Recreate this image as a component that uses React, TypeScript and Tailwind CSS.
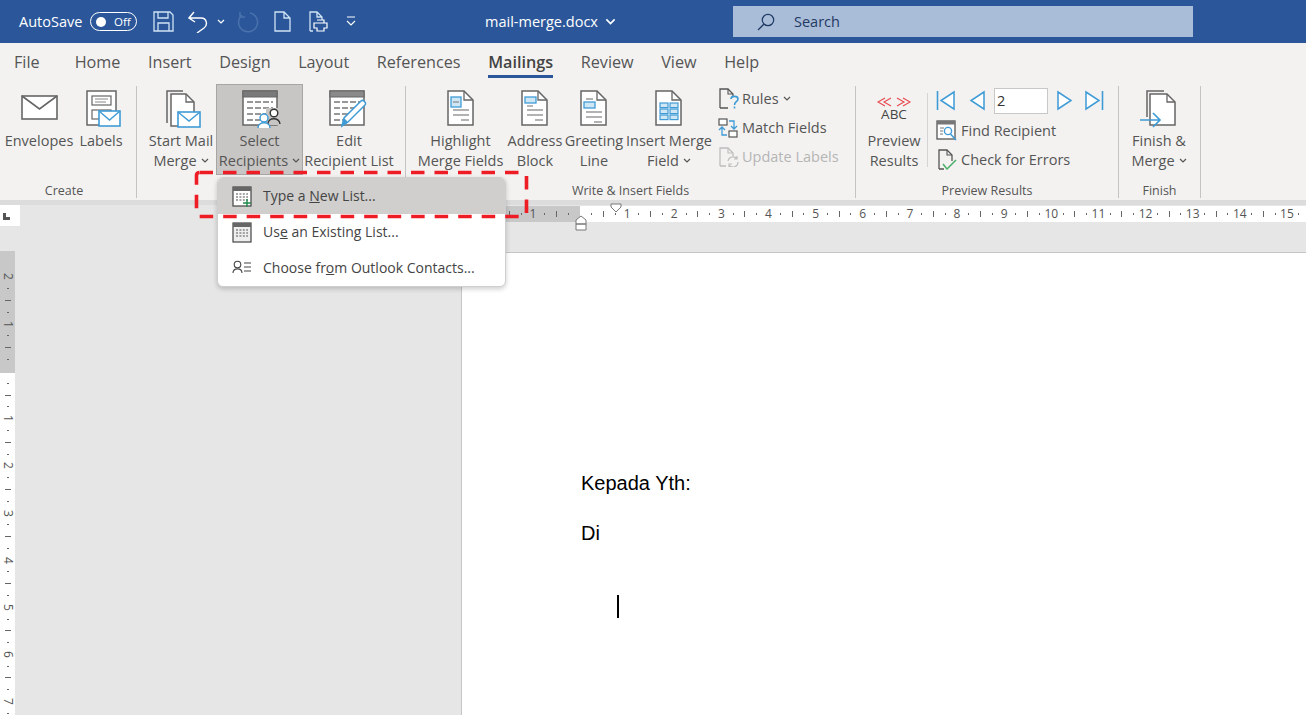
import React from "react";

const G = "#666666";
const B = "#3f9bd6";

const Chev = ({ c = "#555", w = 8, h = 5 }: { c?: string; w?: number; h?: number }) => (
  <svg width={w} height={h} viewBox="0 0 8 5" preserveAspectRatio="none" className="inline-block shrink-0">
    <polyline points="1,1 4,4 7,1" fill="none" stroke={c} strokeWidth="1.2" />
  </svg>
);

const Mail = ({ x, y, w = 23, h = 15 }: { x: number; y: number; w?: number; h?: number }) => (
  <g>
    <rect x={x} y={y} width={w} height={h} fill="#fff" stroke={B} strokeWidth="1.6" />
    <polyline points={`${x},${y} ${x + w / 2},${y + h * 0.6} ${x + w},${y}`} fill="none" stroke={B} strokeWidth="1.4" />
  </g>
);

const Envelope = () => (
  <svg width={38} height={28} viewBox="0 0 38 28">
    <rect x="1" y="2" width="35" height="23" fill="#fff" stroke={G} strokeWidth="1.6" />
    <polyline points="1,2 18.5,15 36,2" fill="none" stroke={G} strokeWidth="1.6" />
  </svg>
);

const Labels = () => (
  <svg width={36} height={38} viewBox="0 0 36 38">
    <rect x="1" y="1" width="29" height="34" fill="#fff" stroke={G} strokeWidth="1.5" />
    <rect x="6" y="6" width="19" height="9" fill="none" stroke={G} strokeWidth="1.2" />
    <line x1="9" y1="9" x2="22" y2="9" stroke="#888" />
    <line x1="9" y1="12" x2="20" y2="12" stroke="#888" />
    <rect x="6" y="20" width="19" height="9" fill="none" stroke={G} strokeWidth="1.2" />
    <Mail x={13} y={21} w={21} h={15} />
  </svg>
);

const StartMerge = () => (
  <svg width={36} height={38} viewBox="0 0 36 38">
    <path d="M1 33 V1 H17" fill="none" stroke={G} strokeWidth="1.5" />
    <path d="M5 36 V4 H20 L28 12 V36 Z" fill="#fff" stroke={G} strokeWidth="1.5" />
    <path d="M20 4 V12 H28" fill="none" stroke={G} strokeWidth="1.3" />
    <Mail x={12} y={22} w={22} h={15} />
  </svg>
);

const TableLines = ({ lines }: { lines: number[][] }) => (
  <>
    {lines.map((l, i) => (
      <line key={i} x1={l[0]} y1={l[1]} x2={l[2]} y2={l[1]} stroke="#777" strokeWidth="1.3" strokeDasharray="6 2" />
    ))}
  </>
);

const SelectRec = () => (
  <svg width={40} height={38} viewBox="0 0 40 38">
    <rect x="1" y="1" width="34" height="34" fill="#fff" stroke={G} strokeWidth="1.5" />
    <rect x="1" y="1" width="34" height="6" fill="#7a7a7a" stroke={G} />
    <TableLines lines={[[5, 12, 31], [5, 18, 31], [5, 24, 26], [5, 30, 18]]} />
    <rect x="24" y="18" width="14" height="17" fill="#c8c6c4" />
    <circle cx="32" cy="23" r="3.8" fill="#fff" stroke="#333" strokeWidth="1.4" />
    <path d="M26 34 C26 27 37 27 38 34" fill="none" stroke="#333" strokeWidth="1.4" />
    <circle cx="22" cy="28" r="4" fill="#fff" stroke={B} strokeWidth="1.5" />
    <path d="M16 38 C16 31 28 31 28 38" fill="#fff" stroke={B} strokeWidth="1.5" />
  </svg>
);

const EditList = () => (
  <svg width={40} height={38} viewBox="0 0 40 38">
    <rect x="1" y="1" width="34" height="34" fill="#fff" stroke={G} strokeWidth="1.5" />
    <rect x="1" y="1" width="34" height="6" fill="#8a8a8a" stroke={G} />
    <TableLines lines={[[5, 12, 31], [5, 18, 26], [5, 24, 20], [5, 30, 16]]} />
    <path d="M13 36 L15 28 L32 11 C34 9 38 13 36 15 L19 32 Z" fill="#fff" stroke={B} strokeWidth="1.5" />
    <path d="M13 36 L15 28 L19 32 Z" fill={B} />
  </svg>
);

const Doc = ({ children }: { children?: React.ReactNode }) => (
  <svg width={28} height={36} viewBox="0 0 28 36">
    <path d="M1 1 H17 L26 10 V35 H1 Z" fill="#fff" stroke={G} strokeWidth="1.5" />
    <path d="M17 1 V10 H26" fill="none" stroke={G} strokeWidth="1.3" />
    {children}
  </svg>
);

const DocLines = ({ y }: { y: number }) => (
  <>
    <line x1="6" y1={y} x2="22" y2={y} stroke="#888" strokeWidth="1.3" />
    <line x1="6" y1={y + 5} x2="22" y2={y + 5} stroke="#888" strokeWidth="1.3" />
    <line x1="14" y1={y + 10} x2="22" y2={y + 10} stroke="#888" strokeWidth="1.3" />
  </>
);

const Highlight = () => (
  <Doc>
    <rect x="4" y="7" width="10" height="10" fill="#cfe6f5" stroke={B} strokeWidth="1.3" />
    <line x1="6" y1="12" x2="12" y2="12" stroke="#777" />
    <DocLines y={20} />
  </Doc>
);
const Address = () => (
  <Doc>
    <rect x="4" y="7" width="11" height="6" fill="#cfe6f5" stroke={B} strokeWidth="1.3" />
    <line x1="6" y1="16" x2="12" y2="16" stroke="#888" strokeWidth="1.2" />
    <DocLines y={20} />
  </Doc>
);
const Greeting = () => (
  <Doc>
    <line x1="6" y1="9" x2="13" y2="9" stroke="#888" strokeWidth="1.3" />
    <rect x="4" y="12" width="11" height="6" fill="#cfe6f5" stroke={B} strokeWidth="1.3" />
    <DocLines y={22} />
  </Doc>
);
const InsertField = () => (
  <Doc>
    {[13, 19, 25].map((y) => (
      <g key={y}>
        <rect x="5" y={y} width="8" height="4.6" fill="#cfe6f5" stroke={B} strokeWidth="1.2" />
        <rect x="15" y={y} width="8" height="4.6" fill="#cfe6f5" stroke={B} strokeWidth="1.2" />
      </g>
    ))}
  </Doc>
);

const Rules = () => (
  <svg className="translate-x-[2px]" width={21} height={21} viewBox="0 0 21 21">
    <path d="M1 20 V1 H9 L14 6 V8 M1 20 H9" fill="none" stroke="#555" strokeWidth="1.3" />
    <path d="M9 1 V6 H14" fill="none" stroke="#555" strokeWidth="1.1" />
    <path d="M12 11 C12 7.5 19 7.5 19 11 C19 14 15.5 13.5 15.5 17 M15.5 18.5 V20.5" fill="none" stroke={B} strokeWidth="1.6" />
  </svg>
);
const Match = () => (
  <svg width={20} height={20} viewBox="0 0 20 20">
    <rect x="1" y="1" width="8" height="6" fill="#fff" stroke="#555" strokeWidth="1.2" />
    <rect x="11" y="13" width="8" height="6" fill="#fff" stroke="#555" strokeWidth="1.2" />
    <path d="M11 3 H16 V10 M13 8 L16 11 L19 8" fill="none" stroke={B} strokeWidth="1.3" />
    <path d="M9 17 H4 V10 M1 12 L4 9 L7 12" fill="none" stroke={B} strokeWidth="1.3" />
  </svg>
);
const Update = () => (
  <svg className="translate-x-[1px]" width={20} height={20} viewBox="0 0 20 20">
    <path d="M1 19 V1 H9 L14 6 V9 M1 19 H7" fill="none" stroke="#bdbdbd" strokeWidth="1.3" />
    <path d="M9 1 V6 H14" fill="none" stroke="#bdbdbd" strokeWidth="1.1" />
    <path d="M9 14 A5 5 0 0 1 18 12 M19 15 A5 5 0 0 1 10 18 M18 9 V12 H15 M10 20 V17 H13" fill="none" stroke="#bdbdbd" strokeWidth="1.2" />
  </svg>
);

const PreviewIcon = () => (
  <svg width={46} height={20} viewBox="0 0 46 20">
    <g fill="none" stroke="#e8474c" strokeWidth="1.1">
      <polyline points="14,1 7,5 14,9" />
      <polyline points="20,1 13,5 20,9" />
      <polyline points="26,1 33,5 26,9" />
      <polyline points="32,1 39,5 32,9" />
    </g>
  </svg>
);

const Tri = ({ flip, bar }: { flip?: boolean; bar?: boolean }) => (
  <svg width={20} height={21} viewBox="0 0 20 21" style={{ transform: flip ? "scaleX(-1)" : undefined }}>
    <path d={bar ? "M18 2 V19 L5 10.5 Z" : "M16 2 V19 L3 10.5 Z"} fill="#fff" stroke={B} strokeWidth="1.5" />
    {bar && <line x1="1.5" y1="1" x2="1.5" y2="20" stroke={B} strokeWidth="1.6" />}
  </svg>
);

const FindRec = () => (
  <svg width={21} height={21} viewBox="0 0 21 21">
    <rect x="1" y="1" width="18" height="18" fill="#fff" stroke="#555" strokeWidth="1.3" />
    <rect x="1" y="1" width="18" height="3.5" fill="#777" />
    <path d="M4 8 H8 M4 11 H7 M4 14 H7" stroke="#777" strokeWidth="1.2" />
    <circle cx="12" cy="11" r="3.6" fill="#fff" stroke={B} strokeWidth="1.4" />
    <line x1="14.5" y1="14" x2="20" y2="20" stroke={B} strokeWidth="1.6" />
  </svg>
);
const CheckErr = () => (
  <svg width={19} height={21} viewBox="0 0 19 21">
    <path d="M1 20 V1 H9 L14 6 V12 M1 20 H6" fill="none" stroke="#555" strokeWidth="1.3" />
    <path d="M9 1 V6 H14" fill="none" stroke="#555" strokeWidth="1.1" />
    <polyline points="5,15 9,20 18,11" fill="none" stroke="#4caf6a" strokeWidth="1.5" />
  </svg>
);

const FinishIcon = () => (
  <svg width={36} height={38} viewBox="0 0 36 38">
    <path d="M7 27 V1 H24" fill="none" stroke={G} strokeWidth="1.5" />
    <path d="M10 35 V4 H27 L35 12 V35 Z" fill="#fff" stroke={G} strokeWidth="1.5" />
    <path d="M27 4 V12 H35" fill="none" stroke={G} strokeWidth="1.3" />
    <path d="M0 30 H19 M13 23 L20 30 L13 37" fill="none" stroke={B} strokeWidth="1.7" />
  </svg>
);

function LargeBtn({ w, icon, lines, chev, active, iconH = 40 }: { w: number; icon: React.ReactNode; lines: string[]; chev?: boolean; active?: boolean; iconH?: number }) {
  return (
    <div
      className={`flex flex-col items-center shrink-0 h-[91px] ${active ? "bg-[#c8c6c4] border border-[#a8a6a4] pt-[5px]" : "pt-[6px]"}`}
      style={{ width: w }}
    >
      <div className="flex items-start justify-center" style={{ height: iconH }}>{icon}</div>
      <div className="text-[14.5px] leading-[19.5px] text-center text-[#555] whitespace-nowrap mt-[1px]">
        {lines.map((l, i) => (
          <div key={i} className="flex items-center justify-center gap-[4px]">
            <span>{l}</span>
            {chev && i === lines.length - 1 && <Chev />}
          </div>
        ))}
      </div>
    </div>
  );
}

function Group({ w, label, pl = 0, lpr = 0, children }: { w: number; label: string; pl?: number; lpr?: number; children: React.ReactNode }) {
  return (
    <div className="flex flex-col shrink-0 h-[112px] border-r border-[#c4c4c4] mt-[2px]" style={{ width: w }}>
      <div className="flex h-[91px] -mt-[2px]" style={{ paddingLeft: pl }}>{children}</div>
      <div className="text-[12.5px] leading-[16px] text-[#555] text-center mt-[8px]" style={{ paddingRight: lpr }}>{label}</div>
    </div>
  );
}

const SmallBtn = ({ icon, label, dim, chev, h = 29 }: { icon: React.ReactNode; label: string; dim?: boolean; chev?: boolean; h?: number }) => (
  <div className="flex items-center gap-[4px] whitespace-nowrap text-[14.5px] shrink-0" style={{ height: h, color: dim ? "#b5b5b5" : "#555" }}>
    <div className="w-[21px] flex justify-end">{icon}</div>
    <span>{label}</span>
    {chev && <Chev />}
  </div>
);

const TAB_CLS = "text-[16.2px] text-[#555] leading-[24px]";

function TitleBar() {
  return (
    <div className="h-[43px] bg-[#2b579a] flex items-center text-white shrink-0">
      <span className="ml-[19px] text-[14.5px] w-[71px]">AutoSave</span>
      <div className="w-[47px] h-[19px] rounded-full border border-white flex items-center pl-[5px] gap-[8px]">
        <div className="w-[10px] h-[10px] rounded-full bg-white" />
        <span className="text-[11.5px] leading-none">Off</span>
      </div>
      <svg className="ml-[16px]" width={21} height={21} viewBox="0 0 21 21">
        <path d="M1 1 H17 L20 4 V20 H1 Z M5 1 V7 H15 V1 M5 20 V12 H16 V20" fill="none" stroke="#cfe3f5" strokeWidth="1.3" />
      </svg>
      <svg className="ml-[14px]" width={21} height={22} viewBox="0 0 21 22">
        <path d="M1 7 H13 C19 7 20 14 16 17 L9 22 M6 1 L1 7 L7 11" fill="none" stroke="#fff" strokeWidth="1.4" />
      </svg>
      <div className="ml-[7px] w-[10px] flex justify-center"><Chev c="#fff" /></div>
      <svg className="ml-[11px]" width={22} height={22} viewBox="0 0 22 22">
        <path d="M5 4 A9.5 9.5 0 1 0 13 2 M3 1 L3 6 L8 6" fill="none" stroke="#4a72ad" strokeWidth="1.5" />
      </svg>
      <svg className="ml-[15px]" width={17} height={21} viewBox="0 0 17 21">
        <path d="M1 1 H10 L16 7 V20 H1 Z M10 1 V7 H16" fill="none" stroke="#cfe3f5" strokeWidth="1.3" />
      </svg>
      <svg className="ml-[18px]" width={19} height={21} viewBox="0 0 19 21">
        <path d="M1 20 V1 H8 L13 6 V9 M8 1 V6 H13 M1 20 H4" fill="none" stroke="#cfe3f5" strokeWidth="1.3" />
        <path d="M5 12 H18 V17 H15 V20 H8 V17 H5 Z M8 9 H15 V12" fill="none" stroke="#fff" strokeWidth="1.2" />
      </svg>
      <svg className="ml-[18px]" width={10} height={11} viewBox="0 0 10 11">
        <path d="M1 1 H9 M1 5 L5 9 L9 5" fill="none" stroke="#fff" strokeWidth="1.1" />
      </svg>
      <span className="ml-[129px] text-[14.5px] w-[120px]">mail-merge.docx</span>
      <Chev c="#fff" w={11} h={7} />
      <div className="ml-[117px] w-[460px] h-[31px] bg-[#a9bcd8] flex items-center pl-[24px] text-[#1f3a63]">
        <svg width={18} height={18} viewBox="0 0 18 18">
          <circle cx="11" cy="7" r="5.7" fill="none" stroke="#1f3a63" strokeWidth="1.2" />
          <line x1="7" y1="11" x2="1" y2="17" stroke="#1f3a63" strokeWidth="1.3" />
        </svg>
        <span className="ml-[19px] text-[14.5px]">Search</span>
      </div>
    </div>
  );
}

function Tabs() {
  const rest = ["Home", "Insert", "Design", "Layout", "References"];
  return (
    <div className="h-[41px] bg-[#f3f2f1] flex pl-[14px] pt-[7px] shrink-0">
      <span className={`${TAB_CLS} mr-[35px]`}>File</span>
      <div className="flex gap-[27.6px]">
        {rest.map((t) => (
          <span key={t} className={TAB_CLS}>{t}</span>
        ))}
        <span className="text-[16.2px] leading-[24px] font-semibold h-[28px] border-b-[3px] border-[#2b579a] text-[#444]">Mailings</span>
        <span className={TAB_CLS}>Review</span>
        <span className={TAB_CLS}>View</span>
        <span className={TAB_CLS}>Help</span>
      </div>
    </div>
  );
}

function Ribbon() {
  return (
    <div className="h-[116px] bg-[#f3f2f1] flex shrink-0 overflow-hidden">
      <Group w={137} label="Create" lpr={8}>
        <LargeBtn w={78} icon={<div className="pt-[4px] pl-[1px]"><Envelope /></div>} lines={["Envelopes"]} />
        <LargeBtn w={46} icon={<div className="pl-[6px]"><Labels /></div>} lines={["Labels"]} />
      </Group>
      <Group w={269} label="" pl={9}>
        <LargeBtn w={70} icon={<div className="pl-[6px]"><StartMerge /></div>} lines={["Start Mail", "Merge"]} chev />
        <LargeBtn w={87} icon={<div className="pl-[4px]"><SelectRec /></div>} lines={["Select", "Recipients"]} chev active />
        <LargeBtn w={92} icon={<EditList />} lines={["Edit", "Recipient List"]} />
      </Group>
      <Group w={450} label="Write & Insert Fields" pl={9}>
        <LargeBtn w={91} icon={<Highlight />} lines={["Highlight", "Merge Fields"]} />
        <LargeBtn w={58} icon={<Address />} lines={["Address", "Block"]} />
        <LargeBtn w={60} icon={<Greeting />} lines={["Greeting", "Line"]} />
        <LargeBtn w={90} icon={<InsertField />} lines={["Insert Merge", "Field"]} chev />
        <div className="flex flex-col ml-[3px]">
          <SmallBtn icon={<Rules />} label="Rules" chev />
          <SmallBtn icon={<Match />} label="Match Fields" />
          <SmallBtn icon={<Update />} label="Update Labels" dim />
        </div>
      </Group>
      <Group w={263} label="Preview Results" pl={4}>
        <LargeBtn w={68} icon={<div className="pt-[7px] flex flex-col items-center leading-none"><PreviewIcon /><span className="text-[13.5px] -mt-[9px] text-[#444]">ABC</span></div>} lines={["Preview", "Results"]} />
        <div className="flex flex-col border-l border-[#d4d4d4] h-[74px] mt-[9px] pl-[8px] -ml-px">
          <div className="flex items-center h-[29px] -mt-[7px] mb-[1px] shrink-0">
            <Tri bar />
            <div className="ml-[12px]"><Tri /></div>
            <div className="ml-[6px] w-[54px] h-[26px] bg-white border border-[#c8c8c8] text-[14.5px] text-[#333] pl-[2px] leading-[24px]">2</div>
            <div className="ml-[6px]"><Tri flip /></div>
            <div className="ml-[10px]"><Tri bar flip /></div>
          </div>
          <SmallBtn icon={<FindRec />} label="Find Recipient" h={29} />
          <SmallBtn icon={<CheckErr />} label="Check for Errors" h={29} />
        </div>
      </Group>
      <Group w={82} label="Finish">
        <LargeBtn w={80} icon={<div className="-ml-[2px]"><FinishIcon /></div>} lines={["Finish &", "Merge"]} chev />
      </Group>
    </div>
  );
}

const RULER_FONT = "text-[12px] text-[#555] leading-none";

function HItem({ v }: { v: number | "." | "-" }) {
  return (
    <div className="w-[11.79px] shrink-0 flex items-center justify-center h-full">
      {v === "." ? <div className="w-px h-[2px] bg-[#666]" /> : v === "-" ? <div className="w-px h-[6px] bg-[#666]" /> : <span className={RULER_FONT}>{v}</span>}
    </div>
  );
}

function VItem({ v }: { v: number | "." | "-" }) {
  return (
    <div className="h-[11.79px] shrink-0 flex items-center justify-center w-full">
      {v === "." ? <div className="h-px w-[2px] bg-[#666]" /> : v === "-" ? <div className="h-px w-[6px] bg-[#666]" /> : <span className={`${RULER_FONT} [writing-mode:vertical-rl]`}>{v}</span>}
    </div>
  );
}

const seq = (nums: number[]) => nums.flatMap((n) => [".", "-", ".", n] as (number | "." | "-")[]);

function HRuler() {
  return (
    <div className="h-[22px] flex shrink-0 relative bg-[#e6e6e6]">
      <div className="w-[20px] h-[21px] bg-white relative">
        <div className="absolute left-[3px] top-[8px] w-[7px] h-[7px] border-l-[3px] border-b-[3px] border-[#555]" />
      </div>
      <div className="flex flex-col w-[1286px]">
        <div className="h-[1px]" />
        <div className="h-[16px] ml-[442px] flex">
          <div className="w-[118px] bg-[#c8c8c8] flex justify-end pr-[5.9px]">
            {([".", "-", ".", 1, ".", "-", "."] as (number | "." | "-")[]).map((v, i) => <HItem key={i} v={v} />)}
          </div>
          <div className="flex-1 bg-white flex pl-[5.9px] overflow-hidden">
            {seq([1, 2, 3, 4, 5, 6, 7, 8, 9, 10, 11, 12, 13, 14, 15]).map((v, i) => <HItem key={i} v={v} />)}
            <HItem v="." />
          </div>
        </div>
      </div>
      <svg className="absolute left-[610px] top-[-2px]" width={12} height={10} viewBox="0 0 12 10">
        <path d="M1 1 H11 V4 L6 9 L1 4 Z" fill="#fff" stroke="#777" />
      </svg>
      <svg className="absolute left-[575px] top-[10px]" width={12} height={16} viewBox="0 0 12 16">
        <path d="M1 5 L6 1 L11 5 V9 H1 Z M1 9 H11 V15 H1 Z" fill="#fff" stroke="#777" />
      </svg>
    </div>
  );
}

function VRuler() {
  return (
    <div className="w-[15px] flex flex-col h-[464px] shrink-0">
      <div className="h-[122px] bg-[#c8c8c8] pt-[20px]">
        {([2, ".", "-", ".", 1, ".", "-", "."] as (number | "." | "-")[]).map((v, i) => <VItem key={i} v={v} />)}
      </div>
      <div className="flex-1 bg-white pt-[4.5px] overflow-hidden">
        {seq([1, 2, 3, 4, 5, 6, 7]).map((v, i) => <VItem key={i} v={v} />)}
        <VItem v="." />
      </div>
    </div>
  );
}

function Doc2() {
  return (
    <div className="flex-1 flex bg-[#e6e6e6] min-h-0">
      <div className="w-[462px] shrink-0 pt-[24px] border-r border-[#c6c6c6]">
        <VRuler />
      </div>
      <div className="flex-1 mt-[25px] bg-white border-t border-[#c6c6c6] pl-[119px] pt-[217px] text-[20px] text-black [font-family:'Liberation_Sans',sans-serif]">
        <div className="leading-[26px]">Kepada Yth:</div>
        <div className="leading-[26px] mt-[24px]">Di</div>
        <div className="w-[2px] h-[23px] bg-black ml-[36px] mt-[49px]" />
      </div>
    </div>
  );
}

function Menu() {
  const Cal = ({ plus, gray }: { plus?: boolean; gray?: boolean }) => (
    <svg width={20} height={21} viewBox="0 0 20 21">
      <rect x="1" y="1" width="18" height="19" fill={gray ? "#eee" : "#fff"} stroke="#444" strokeWidth="1.2" />
      <rect x="1" y="1" width="18" height="4" fill="#666" />
      {[8, 11, 14].map((y) => (
        <line key={y} x1="4" y1={y} x2="16" y2={y} stroke="#888" strokeWidth="1.4" strokeDasharray="2 1.4" />
      ))}
      {plus && <path d="M15 13 V21 M11 17 H19" stroke="#1f8a4c" strokeWidth="1.4" />}
    </svg>
  );
  const Item = ({ icon, children, on }: { icon: React.ReactNode; children: React.ReactNode; on?: boolean }) => (
    <div className={`h-[36px] flex items-center pl-[14px] ${on ? "bg-[#d0cfcd] rounded-t-[5px]" : ""}`}>
      <div className="w-[31px]">{icon}</div>
      <span className="text-[14px] text-[#444] whitespace-nowrap -mt-[2px]">{children}</span>
    </div>
  );
  return (
    <div className="absolute left-[217px] top-[177px] w-[289px] h-[110px] bg-white rounded-[6px] border border-[#cfcfcf] shadow-[0_2px_5px_rgba(0,0,0,0.2)]">
      <Item on icon={<Cal plus />}>Type a <u>N</u>ew List...</Item>
      <Item icon={<Cal gray />}>Us<u>e</u> an Existing List...</Item>
      <Item icon={
        <svg width={20} height={16} viewBox="0 0 20 16">
          <circle cx="5.5" cy="4.5" r="3.3" fill="none" stroke="#444" strokeWidth="1.1" />
          <path d="M1 13 C1 7.5 10 7.5 10 13" fill="none" stroke="#444" strokeWidth="1.1" />
          <path d="M12 3 H19 M12 7 H19 M12 11 H19" stroke="#444" strokeWidth="1.1" />
        </svg>
      }>Choose fr<u>o</u>m Outlook Contacts...</Item>
    </div>
  );
}

export default function App() {
  return (
    <div className="relative w-[1306px] h-[715px] overflow-hidden flex flex-col bg-[#e6e6e6] [font-family:'Open_Sans','Noto_Sans',sans-serif]">
      <TitleBar />
      <Tabs />
      <Ribbon />
      <div className="h-[5px] bg-[#dcdcdc] shrink-0" />
      <HRuler />
      <Doc2 />
      <Menu />
      <svg className="absolute left-[194px] top-[170px] pointer-events-none" width={336} height={50} viewBox="0 0 336 50">
        <rect x="2.5" y="2.5" width="330" height="44" rx="3" fill="none" stroke="#ee1c25" strokeWidth="3.6" strokeDasharray="13.5 10" />
      </svg>
    </div>
  );
}
